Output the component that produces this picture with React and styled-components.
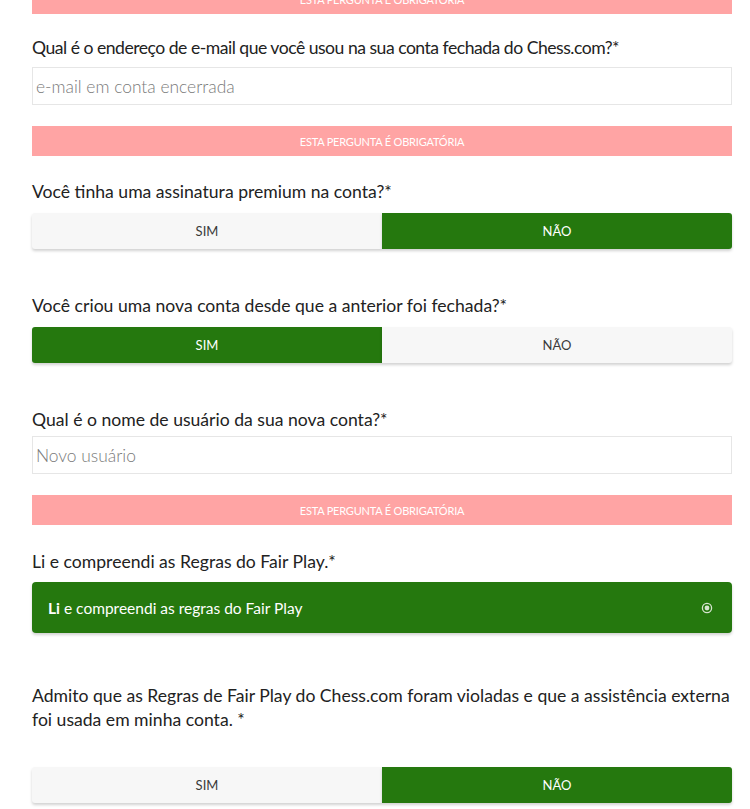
import React from "react";
import styled, { createGlobalStyle } from "styled-components";

const Global = createGlobalStyle`
  html, body { margin: 0; padding: 0; background: #fff; }
  body { font-family: Lato, "Open Sans", sans-serif; color: #2b2b2b; overflow: hidden; }
  * { box-sizing: border-box; }
`;

const Page = styled.div`
  width: 700px;
  margin-left: 32px;
  margin-top: -16px;
  display: flex;
  flex-direction: column;
`;

const Banner = styled.div`
  height: 30px;
  background: #ffa4a4;
  color: #fff;
  font-size: 11px;
  letter-spacing: -0.2px;
  text-transform: uppercase;
  display: flex;
  align-items: center;
  justify-content: center;
  margin-bottom: ${(p) => p.$after}px;
`;

const Question = styled.div`
  display: flex;
  flex-direction: column;
  margin-bottom: ${(p) => p.$after}px;
`;

const Label = styled.label`
  font-size: 17.6px;
  line-height: 24px;
  color: #222;
  letter-spacing: ${(p) => (p.$tight ? "-0.5px" : "0")};
  padding-right: ${(p) => p.$pr || 0}px;
  margin-bottom: ${(p) => p.$gap}px;
`;

const Input = styled.input`
  height: 38px;
  border: 1px solid #e6e6e6;
  padding: 0 3px;
  font-family: Lato, sans-serif;
  font-size: 17.4px;
  font-weight: 300;
  color: #333;
  outline: none;
  &::placeholder { color: #7a7a7a; font-weight: 300; }
`;

const Toggle = styled.div`
  display: grid;
  grid-template-columns: 1fr 1fr;
  height: 36px;
`;

const Choice = styled.button`
  border: none;
  font-family: Lato, sans-serif;
  font-size: 13px;
  text-transform: uppercase;
  cursor: pointer;
  background: ${(p) => (p.$on ? "#25780e" : "#f7f7f7")};
  color: ${(p) => (p.$on ? "#fff" : "#3a3a3a")};
  font-weight: 400;
  box-shadow: 0 2px 3px rgba(0, 0, 0, 0.18);
  border-radius: ${(p) => (p.$side === "left" ? "3px 0 0 3px" : "0 3px 3px 0")};
`;

const Agree = styled.div`
  height: 51px;
  background: #25780e;
  border-radius: 4px;
  box-shadow: 0 2px 3px rgba(0, 0, 0, 0.18);
  display: flex;
  align-items: center;
  justify-content: space-between;
  padding: 0 19px 0 16px;
  color: #fff;
  font-size: 15.5px;
  b { font-weight: 700; }
`;

const Radio = () => (
  <svg width="12" height="12" viewBox="0 0 12 12">
    <circle cx="6" cy="6" r="4.6" fill="none" stroke="#d6e4cf" strokeWidth="1.3" />
    <circle cx="6" cy="6" r="2.4" fill="#d6e4cf" />
  </svg>
);

const YesNo = ({ value }) => (
  <Toggle>
    <Choice $side="left" $on={value === "sim"}>Sim</Choice>
    <Choice $side="right" $on={value === "nao"}>Não</Choice>
  </Toggle>
);

export default function App() {
  return (
    <>
      <Global />
      <Page>
        <Banner $after={22}>Esta pergunta é obrigatória</Banner>

        <Question $after={21}>
          <Label $gap={7} $tight>Qual é o endereço de e-mail que você usou na sua conta fechada do Chess.com?*</Label>
          <Input placeholder="e-mail em conta encerrada" />
        </Question>
        <Banner $after={24}>Esta pergunta é obrigatória</Banner>

        <Question $after={45}>
          <Label $gap={9}>Você tinha uma assinatura premium na conta?*</Label>
          <YesNo value="nao" />
        </Question>

        <Question $after={45}>
          <Label $gap={9}>Você criou uma nova conta desde que a anterior foi fechada?*</Label>
          <YesNo value="sim" />
        </Question>

        <Question $after={21}>
          <Label $gap={4}>Qual é o nome de usuário da sua nova conta?*</Label>
          <Input placeholder="Novo usuário" />
        </Question>
        <Banner $after={25}>Esta pergunta é obrigatória</Banner>

        <Question $after={51}>
          <Label $gap={8}>Li e compreendi as Regras do Fair Play.*</Label>
          <Agree>
            <span><b>Li</b> e compreendi as regras do Fair Play</span>
            <Radio />
          </Agree>
        </Question>

        <Question $after={20}>
          <Label $gap={35} $pr={2}>Admito que as Regras de Fair Play do Chess.com foram violadas e que a assistência externa foi usada em minha conta. *</Label>
          <YesNo value="nao" />
        </Question>
      </Page>
    </>
  );
}
